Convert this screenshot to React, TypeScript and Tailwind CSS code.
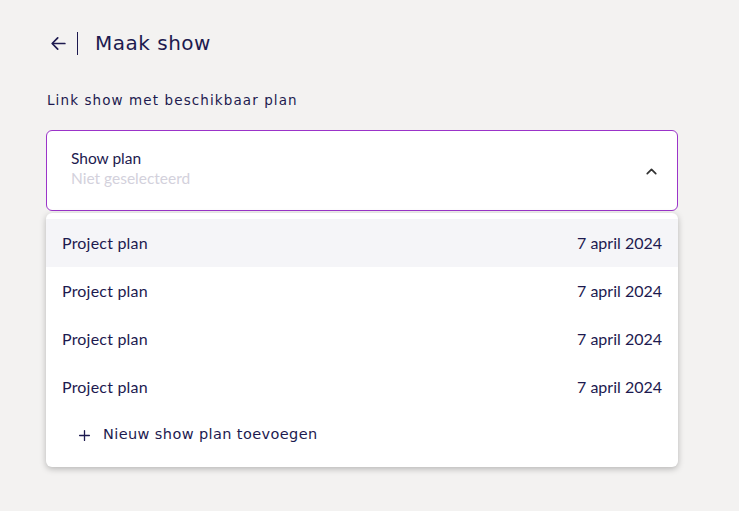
import React from "react";

const rows = [0, 1, 2, 3];

export default function App() {
  return (
    <div className="w-[739px] h-[511px] bg-[#f3f2f1] text-[#1d1a4f] overflow-hidden">
      <div className="pl-[46px] pr-[61px] pt-[31px]">
        <div className="flex items-center h-[24px]">
          <svg width="19" height="19" viewBox="0 0 24 24" fill="none" stroke="#1d1a4f" strokeWidth="2.2" strokeLinecap="round" strokeLinejoin="round" className="ml-[3px]">
            <path d="M20 12H5" />
            <path d="M11 5l-7 7 7 7" />
          </svg>
          <div className="ml-[9px] w-px h-[23px] bg-[#1d1a4f]" />
          <div className="ml-[17px] text-[20px] font-medium font-['DejaVu_Sans',sans-serif] tracking-[0.5px] leading-none">Maak show</div>
        </div>
        <div className="mt-[39px] text-[13.5px] font-['DejaVu_Sans',sans-serif] tracking-[1.1px] leading-none pl-[1px]">Link show met beschikbaar plan</div>
        <div className="mt-[22px] h-[81px] bg-white border border-[#9b34c9] rounded-[6px] flex items-center pl-[24px] pr-[17px]">
          <div className="flex-1 font-['Lato',sans-serif] pb-[4px]">
            <div className="text-[15.5px] leading-[20px] text-[#1d1a4f]">Show plan</div>
            <div className="text-[15.5px] leading-[20px] text-[#d3d1dc]">Niet geselecteerd</div>
          </div>
          <svg width="17" height="17" viewBox="0 0 24 24" fill="none" stroke="#333" strokeWidth="2.4" strokeLinecap="round" strokeLinejoin="round" className="mt-[2px]">
            <path d="M6 15l6-6 6 6" />
          </svg>
        </div>
        <div className="mt-[2px] bg-white rounded-[6px] shadow-[0_2px_6px_rgba(0,0,0,0.25)] pt-[6px] pb-[8px]">
          {rows.map((i) => (
            <div key={i} className={`h-[48px] flex items-center justify-between px-[16px] text-[16px] font-['Lato',sans-serif] ${i === 0 ? "bg-[#f5f5f8]" : ""}`}>
              <span className="tracking-[0.2px]">Project plan</span>
              <span>7 april 2024</span>
            </div>
          ))}
          <div className="h-[48px] flex items-center pl-[32px] pt-[1px]">
            <svg width="13" height="13" viewBox="0 0 24 24" fill="none" stroke="#1d1a4f" strokeWidth="2.4" strokeLinecap="round">
              <path d="M12 3v18" />
              <path d="M3 12h18" />
            </svg>
            <span className="ml-[12px] text-[14.5px] tracking-[0.4px] font-['DejaVu_Sans',sans-serif]">Nieuw show plan toevoegen</span>
          </div>
        </div>
      </div>
    </div>
  );
}
